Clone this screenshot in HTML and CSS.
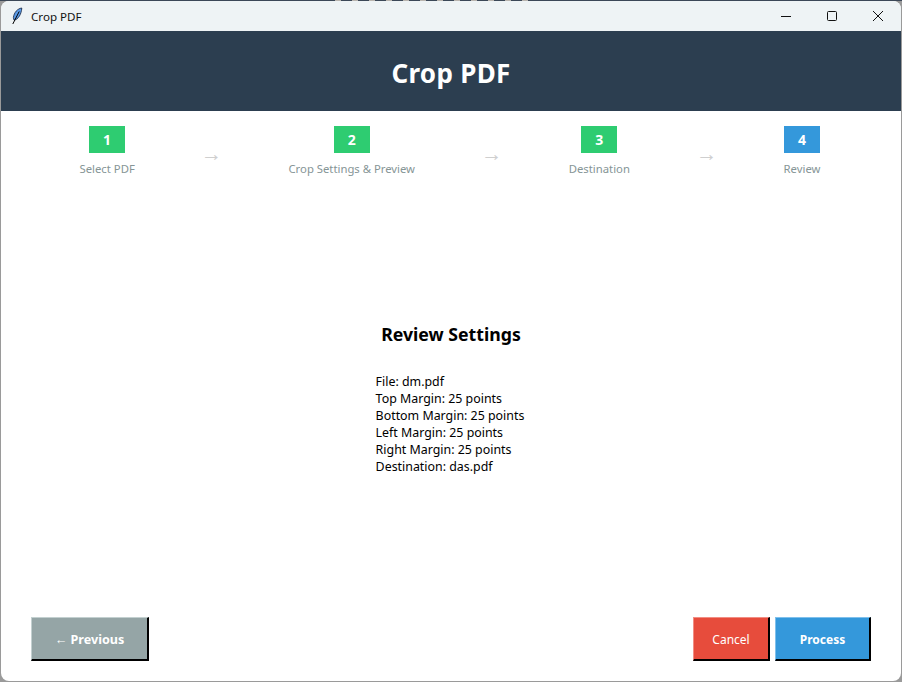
FILE: index.html
```html
<!DOCTYPE html>
<html lang="en">
<head>
    <meta charset="UTF-8">
    <title>Crop PDF</title>
    <link rel="stylesheet" href="styles.css">
</head>
<body>
    <div class="behind-text"></div>
    <div class="window">
        <div class="titlebar">
            <svg class="app-icon" width="12" height="18" viewBox="0 0 12 18">
                <path d="M10.8 1 C6.5 1.6 3 5.5 2.4 10.5 L3 13.2 C7 12.6 10.4 7.5 10.8 1 Z" fill="#5b9be8" stroke="#10203c" stroke-width="0.8"/>
                <path d="M8.2 4.5 L1.8 17" stroke="#000" stroke-width="1" fill="none"/>
            </svg>
            <span class="app-name">Crop PDF</span>
            <div class="win-controls">
                <svg class="win-btn" width="46" height="30" viewBox="0 0 46 30"><path d="M18 15.5 H28" stroke="#111" fill="none"/></svg>
                <svg class="win-btn" width="46" height="30" viewBox="0 0 46 30"><rect x="18.5" y="10.5" width="9" height="9" rx="1" stroke="#111" fill="none"/></svg>
                <svg class="win-btn" width="46" height="30" viewBox="0 0 46 30"><path d="M18 10 L28 20 M28 10 L18 20" stroke="#111" fill="none"/></svg>
            </div>
        </div>

        <div class="header">
            <h1>Crop PDF</h1>
        </div>

        <div class="steps">
            <div class="step">
                <div class="step-num done">1</div>
                <div class="step-label">Select PDF</div>
            </div>
            <div class="arrow">→</div>
            <div class="step">
                <div class="step-num done">2</div>
                <div class="step-label">Crop Settings &amp; Preview</div>
            </div>
            <div class="arrow">→</div>
            <div class="step">
                <div class="step-num done">3</div>
                <div class="step-label">Destination</div>
            </div>
            <div class="arrow">→</div>
            <div class="step">
                <div class="step-num current">4</div>
                <div class="step-label">Review</div>
            </div>
        </div>

        <div class="content">
            <h2>Review Settings</h2>
            <div class="summary">
                <div>File: dm.pdf</div>
                <div>Top Margin: 25 points</div>
                <div>Bottom Margin: 25 points</div>
                <div>Left Margin: 25 points</div>
                <div>Right Margin: 25 points</div>
                <div>Destination: das.pdf</div>
            </div>
        </div>

        <div class="footer">
            <button class="btn btn-prev">← Previous</button>
            <div class="footer-right">
                <button class="btn btn-cancel">Cancel</button>
                <button class="btn btn-process">Process</button>
            </div>
        </div>
    </div>
</body>
</html>
```

FILE: styles.css
```css
html, body {
    margin: 0;
    height: 100%;
}
body {
    background: #9a9a9a;
    border-top: 1px solid #3b4757;
    box-sizing: border-box;
    font-family: "Noto Sans", "Open Sans", sans-serif;
    overflow: hidden;
}
/* sliver of the window behind, showing above the title bar */
.behind-text {
    position: absolute;
    top: 0;
    left: 335px;
    width: 197px;
    height: 1px;
    background: repeating-linear-gradient(90deg, #b9b4ae 0 6px, transparent 6px 17px);
}
.window {
    margin-left: 1px;
    width: 900px;
    height: 680px;
    background: #fff;
    border-radius: 8px;
    overflow: hidden;
    display: flex;
    flex-direction: column;
}
.titlebar {
    height: 30px;
    flex: none;
    background: #eef3f5;
    display: flex;
    align-items: center;
    padding-left: 10px;
}
.app-icon {
    margin-right: 8px;
}
.app-name {
    font-size: 11.6px;
    color: #111;
}
.win-controls {
    margin-left: auto;
    display: flex;
}
.win-btn {
    display: block;
}
.header {
    height: 80px;
    flex: none;
    background: #2c3e50;
    display: flex;
    align-items: center;
    justify-content: center;
}
.header h1 {
    margin: 4px 0 0;
    font-size: 26px;
    letter-spacing: 0.3px;
    font-weight: 700;
    color: #fff;
}
.steps {
    flex: none;
    display: flex;
    justify-content: space-between;
    padding: 15px 80.5px 0 78.5px;
}
.step {
    display: flex;
    flex-direction: column;
    align-items: center;
}
.step-num {
    width: 36px;
    height: 27px;
    color: #fff;
    font-size: 14px;
    font-weight: 700;
    display: flex;
    align-items: center;
    justify-content: center;
}
.done {
    background: #2ecc71;
}
.current {
    background: #3498db;
}
.step-label {
    margin-top: 7px;
    font-size: 11.3px;
    line-height: 17px;
    color: #869596;
}
.arrow {
    color: #cfcfcf;
    font-size: 21px;
    line-height: 17px;
    margin-top: 19px;
}
.content {
    flex: 1;
    display: flex;
    flex-direction: column;
    align-items: center;
    justify-content: center;
    padding-top: 3px;
}
.content h2 {
    margin: 0 0 27px;
    font-size: 17.7px;
    font-weight: 700;
    color: #000;
}
.summary {
    margin-right: 2px;
    font-size: 12.4px;
    line-height: 17px;
    color: #000;
}
.footer {
    flex: none;
    display: flex;
    justify-content: space-between;
    padding: 0 30px 20px;
}
.footer-right {
    display: flex;
    gap: 5px;
}
.btn {
    height: 44px;
    box-sizing: border-box;
    padding: 1px 0 0;
    border-style: solid;
    border-width: 1px 2px 2px 1px;
    border-right-color: #000;
    border-bottom-color: #000;
    color: #fff;
    font-family: inherit;
    font-size: 12px;
    font-weight: 700;
}
.btn-prev {
    width: 118px;
    background: #95a5a6;
    border-top-color: #c3d0d0;
    border-left-color: #c3d0d0;
    font-size: 12.6px;
}
.btn-cancel {
    width: 77px;
    background: #e74c3c;
    border-top-color: #f28d83;
    border-left-color: #f28d83;
    font-weight: 400;
}
.btn-process {
    width: 96px;
    background: #3498db;
    border-top-color: #7fc0ec;
    border-left-color: #7fc0ec;
}
```
